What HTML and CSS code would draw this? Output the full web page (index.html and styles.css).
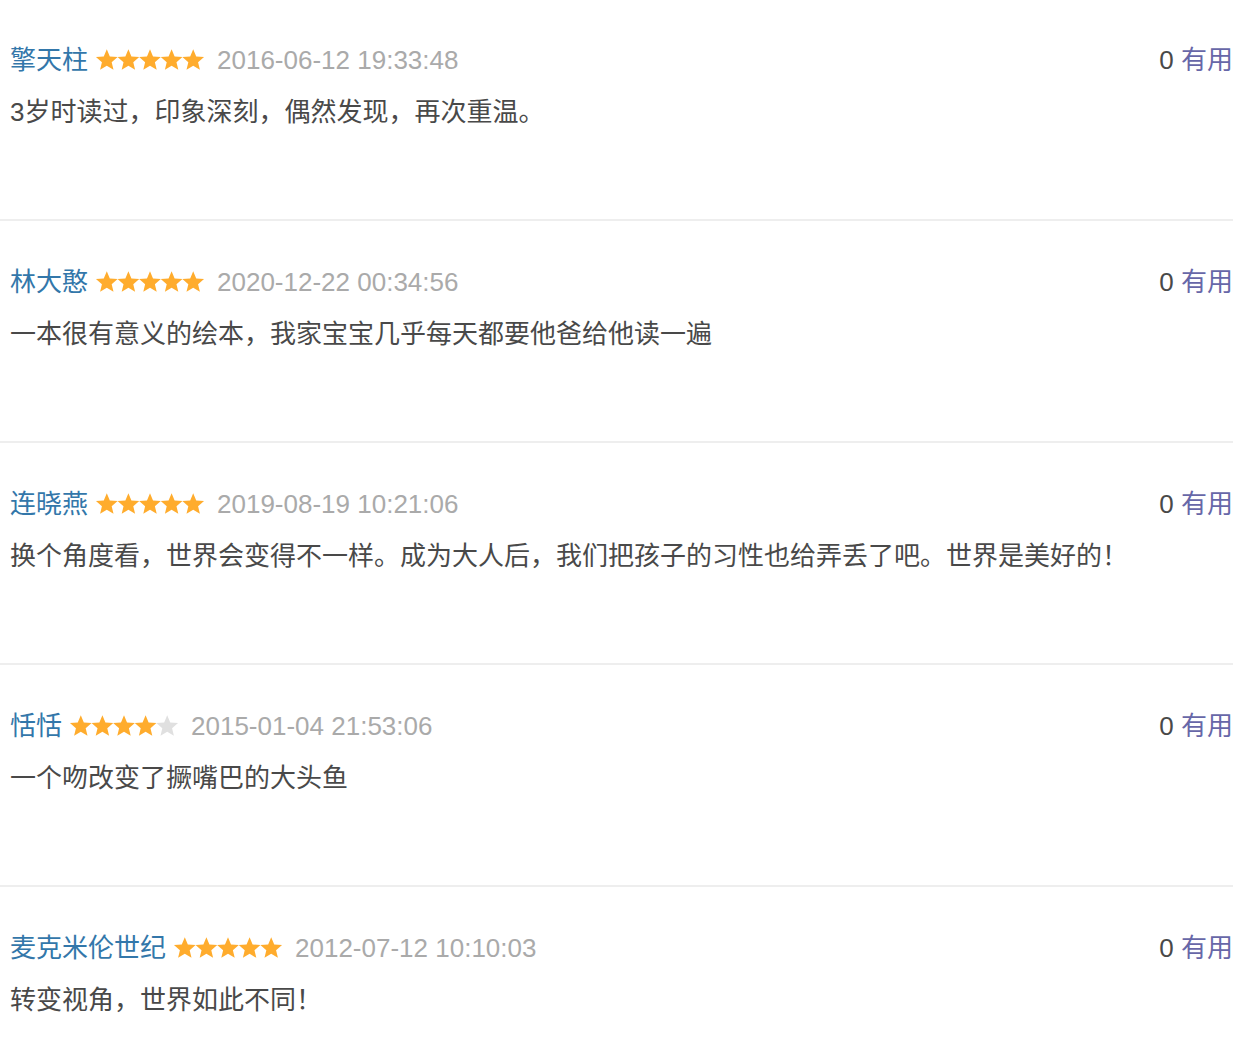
FILE: index.html
```html
<!DOCTYPE html>
<html lang="zh-CN">
<head>
<meta charset="utf-8">
<title>评论</title>
<link rel="stylesheet" href="styles.css">
</head>
<body>
<svg width="0" height="0" class="defs">
  <defs>
    <path id="star" d="M10.8 0.2L13.82 7.45L21.64 8.08L15.68 13.19L17.5 20.82L10.8 16.73L4.1 20.82L5.92 13.19L-0.04 8.08L7.78 7.45Z"/>
  </defs>
</svg>
<ul class="comments">
  <li class="comment">
    <div class="head">
      <div class="meta">
        <a class="name">擎天柱</a>
        <svg class="stars" viewBox="0 0 108 22" width="108" height="22"><use href="#star" class="on"/><use href="#star" x="21.6" class="on"/><use href="#star" x="43.2" class="on"/><use href="#star" x="64.8" class="on"/><use href="#star" x="86.4" class="on"/></svg>
        <span class="time">2016-06-12 19:33:48</span>
      </div>
      <div class="vote"><span class="count">0</span> <a class="useful">有用</a></div>
    </div>
    <p class="text">3岁时读过，印象深刻，偶然发现，再次重温。</p>
  </li>
  <li class="comment">
    <div class="head">
      <div class="meta">
        <a class="name">林大憨</a>
        <svg class="stars" viewBox="0 0 108 22" width="108" height="22"><use href="#star" class="on"/><use href="#star" x="21.6" class="on"/><use href="#star" x="43.2" class="on"/><use href="#star" x="64.8" class="on"/><use href="#star" x="86.4" class="on"/></svg>
        <span class="time">2020-12-22 00:34:56</span>
      </div>
      <div class="vote"><span class="count">0</span> <a class="useful">有用</a></div>
    </div>
    <p class="text">一本很有意义的绘本，我家宝宝几乎每天都要他爸给他读一遍</p>
  </li>
  <li class="comment">
    <div class="head">
      <div class="meta">
        <a class="name">连晓燕</a>
        <svg class="stars" viewBox="0 0 108 22" width="108" height="22"><use href="#star" class="on"/><use href="#star" x="21.6" class="on"/><use href="#star" x="43.2" class="on"/><use href="#star" x="64.8" class="on"/><use href="#star" x="86.4" class="on"/></svg>
        <span class="time">2019-08-19 10:21:06</span>
      </div>
      <div class="vote"><span class="count">0</span> <a class="useful">有用</a></div>
    </div>
    <p class="text">换个角度看，世界会变得不一样。成为大人后，我们把孩子的习性也给弄丢了吧。世界是美好的！</p>
  </li>
  <li class="comment">
    <div class="head">
      <div class="meta">
        <a class="name">恬恬</a>
        <svg class="stars" viewBox="0 0 108 22" width="108" height="22"><use href="#star" class="on"/><use href="#star" x="21.6" class="on"/><use href="#star" x="43.2" class="on"/><use href="#star" x="64.8" class="on"/><use href="#star" x="86.4" class="off"/></svg>
        <span class="time">2015-01-04 21:53:06</span>
      </div>
      <div class="vote"><span class="count">0</span> <a class="useful">有用</a></div>
    </div>
    <p class="text">一个吻改变了撅嘴巴的大头鱼</p>
  </li>
  <li class="comment">
    <div class="head">
      <div class="meta">
        <a class="name">麦克米伦世纪</a>
        <svg class="stars" viewBox="0 0 108 22" width="108" height="22"><use href="#star" class="on"/><use href="#star" x="21.6" class="on"/><use href="#star" x="43.2" class="on"/><use href="#star" x="64.8" class="on"/><use href="#star" x="86.4" class="on"/></svg>
        <span class="time">2012-07-12 10:10:03</span>
      </div>
      <div class="vote"><span class="count">0</span> <a class="useful">有用</a></div>
    </div>
    <p class="text">转变视角，世界如此不同！</p>
  </li>
</ul>
</body>
</html>
```
FILE: styles.css
```css
html, body {
  margin: 0;
  padding: 0;
  background: #fff;
}
body {
  font-family: "Liberation Sans", "Noto Sans CJK SC", sans-serif;
  font-size: 26px;
  color: #494949;
}
.defs {
  position: absolute;
}
.comments {
  list-style: none;
  margin: -1px 0 0;
  padding: 0;
  width: 1233px;
}
.comment {
  box-sizing: border-box;
  height: 222px;
  padding: 41px 0 0 10px;
  border-bottom: 2px solid #eeeeee;
}
.head {
  display: flex;
  justify-content: space-between;
  align-items: center;
  height: 40px;
  line-height: 40px;
}
.meta {
  display: flex;
  align-items: center;
}
.name {
  color: #3377aa;
}
.stars {
  margin-left: 8px;
  display: block;
  overflow: visible;
}
.stars .on {
  fill: #ffac2d;
}
.stars .off {
  fill: #e0e0e0;
}
.time {
  margin-left: 13px;
  color: #aaaaaa;
}
.vote {
  white-space: pre;
}
.count {
  color: #494949;
}
.useful {
  color: #6767a8;
}
.text {
  margin: 12px 0 0;
  line-height: 40px;
}
```
